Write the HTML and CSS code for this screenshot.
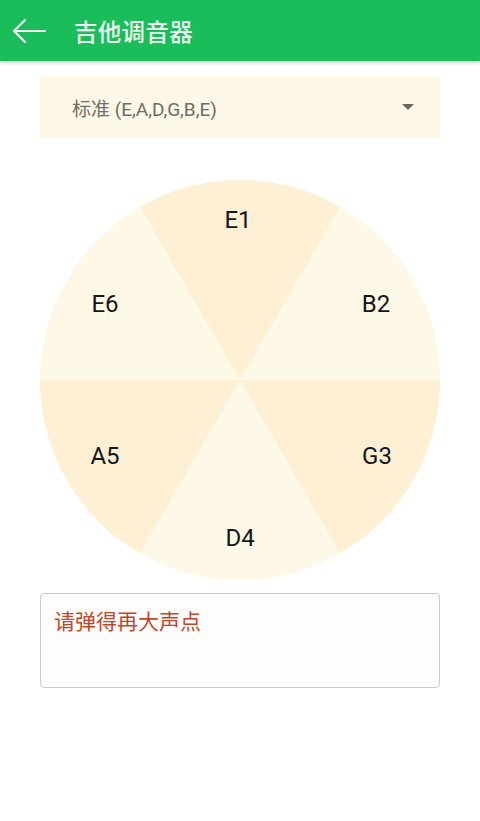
FILE: index.html
```html
<!DOCTYPE html>
<html lang="zh-CN">
<head>
<meta charset="utf-8">
<title>吉他调音器</title>
<link rel="stylesheet" href="styles.css">
</head>
<body>
<header class="appbar">
  <svg class="back" width="34" height="26" viewBox="0 0 34 26" aria-hidden="true">
    <path d="M33 13 H2 M13 2 L2 13 L13 24" fill="none" stroke="#eef9f2" stroke-width="2.2" stroke-linecap="round" stroke-linejoin="round"/>
  </svg>
  <h1 class="title">吉他调音器</h1>
</header>
<main class="content">
  <div class="select">
    <span class="select-text">标准 (E,A,D,G,B,E)</span>
    <span class="caret"></span>
  </div>
  <div class="wheel">
    <svg class="wheel-svg" width="400" height="400" viewBox="0 0 400 400">
      <text x="198" y="40">E1</text>
      <text x="336" y="124">B2</text>
      <text x="337" y="276">G3</text>
      <text x="200" y="358">D4</text>
      <text x="65" y="276">A5</text>
      <text x="65" y="124">E6</text>
    </svg>
  </div>
  <div class="message">请弹得再大声点</div>
</main>
</body>
</html>
```
FILE: styles.css
```css
html, body {
  margin: 0;
  padding: 0;
  background: #ffffff;
}
body {
  width: 480px;
  height: 821px;
  overflow: hidden;
  font-family: "Noto Sans CJK SC", "Roboto", sans-serif;
}
.appbar {
  height: 61px;
  background: #1bbd5a;
  display: flex;
  align-items: center;
  box-shadow: 0 2px 4px rgba(0,0,0,0.18);
  position: relative;
  z-index: 1;
}
.back {
  margin-left: 12px;
  margin-right: 28px;
  display: block;
}
.title {
  margin: 0;
  font-size: 23.5px;
  font-weight: 500;
  color: #eef9f2;
  letter-spacing: 0.3px;
}
.content {
  padding: 15px 40px 0;
  display: flex;
  flex-direction: column;
}
.select {
  height: 62px;
  background: #fdf8e8;
  display: flex;
  align-items: center;
  justify-content: space-between;
  padding: 0 26px 0 32px;
}
.select-text {
  font-family: "Roboto", "Noto Sans CJK SC", sans-serif;
  font-size: 19px;
  color: #6e6d63;
}
.caret {
  width: 0;
  height: 0;
  border-left: 6px solid transparent;
  border-right: 6px solid transparent;
  border-top: 6px solid #6b6a60;
}
.wheel {
  margin-top: 42px;
  width: 400px;
  height: 400px;
  border-radius: 50%;
  background: conic-gradient(from -30deg,
    #fdf0d4 0deg 60deg,
    #fef8e7 60deg 120deg,
    #fdf0d4 120deg 180deg,
    #fef8e8 180deg 240deg,
    #fdf0d4 240deg 300deg,
    #fef8e7 300deg 360deg);
}
.wheel-svg {
  display: block;
}
.wheel-svg text {
  font-family: "Roboto", "Liberation Sans", sans-serif;
  font-size: 24px;
  fill: #151515;
  text-anchor: middle;
  dominant-baseline: central;
}
.message {
  margin-top: 13px;
  height: 95px;
  box-sizing: border-box;
  border: 1px solid #c9c9c9;
  border-radius: 4px;
  background: #fffdfc;
  padding: 12px 13px;
  font-size: 21px;
  line-height: 28px;
  color: #c0462c;
}
```
